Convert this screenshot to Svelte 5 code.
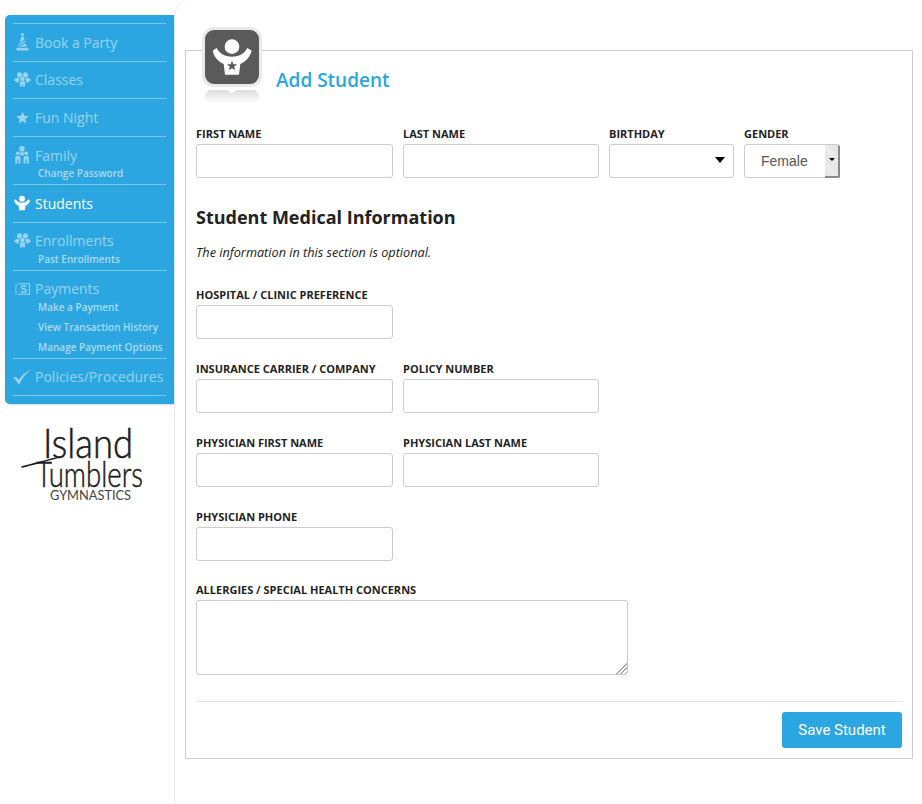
<script>
   // left menu, sub links are plain text rows under the main entry
   const menu = [
      { label: 'Book a Party', icon: 'hat' },
      { label: 'Classes', icon: 'group' },
      { label: 'Fun Night', icon: 'star' },
      { label: 'Family', icon: 'family', subs: ['Change Password'] },
      { label: 'Students', icon: 'kid', active: true },
      { label: 'Enrollments', icon: 'group', subs: ['Past Enrollments'] },
      { label: 'Payments', icon: 'bill', subs: ['Make a Payment', 'View Transaction History', 'Manage Payment Options'] },
      { label: 'Policies/Procedures', icon: 'check' }
   ];
</script>

{#snippet kid()}
   <circle cx="126" cy="78" r="22" />
   <path d="M68 90 L80 82 C88 98 102 108 126 108 C150 108 164 98 172 82 L185 90 C180 108 168 122 151 130 L147 162 L105 162 L101 130 C84 122 72 108 68 90 Z" />
{/snippet}

{#snippet icon(name)}
   {#if name === 'hat'}
      <svg class="ico hat" viewBox="0 0 13 18">
         <circle cx="6.500" cy="1.500" r="1.400" />
         <path d="M5.600 3.500 L7.400 3.500 L10.800 13.500 L2.200 13.500 Z" />
         <path d="M4 9 L9 6.500 L9.300 7.600 L3.500 10.500 Z M3 12 L10 8.800 L10.300 9.900 L2.800 13.300 Z" class="cut" />
         <path d="M0.500 14.800 H12.500 V17.500 H0.500 Z" />
      </svg>
   {:else if name === 'group'}
      <svg class="ico" viewBox="0 0 20 20">
         <circle cx="6.500" cy="4.500" r="3" />
         <circle cx="13.500" cy="4.500" r="3" />
         <circle cx="10" cy="9.500" r="2.600" />
         <path d="M0 11 C1 8 4 7.500 6 8.200 L6.500 10.500 L4.500 14 Z" />
         <path d="M20 11 C19 8 16 7.500 14 8.200 L13.500 10.500 L15.500 14 Z" />
         <path d="M6.500 12.800 C8 12 12 12 13.500 12.800 L12.500 18.500 H11 L10 15.800 L9 18.500 H7.500 Z" />
      </svg>
   {:else if name === 'star'}
      <svg class="ico star" viewBox="1 1.500 18 17">
         <path d="M10 2 L12.500 7.600 L18.600 8.200 L14 12.200 L15.400 18.200 L10 15 L4.600 18.200 L6 12.200 L1.400 8.200 L7.500 7.600 Z" />
      </svg>
   {:else if name === 'family'}
      <svg class="ico family" viewBox="0 0 14 18">
         <circle cx="7" cy="2.800" r="2.800" />
         <circle cx="2.800" cy="7.300" r="1.900" />
         <circle cx="11.200" cy="7.300" r="1.900" />
         <path d="M0.200 11 C0.500 9.500 5 9.500 5.400 11 L5.400 17.500 H3.500 V13.500 H2.200 V17.500 H0.200 Z" />
         <path d="M8.600 11 C9 9.500 13.500 9.500 13.800 11 L13.800 17.500 H11.800 V13.500 H10.500 V17.500 H8.600 Z" />
         <path d="M5.200 6.200 H8.800 V9.500 H5.200 Z" />
      </svg>
   {:else if name === 'kid'}
      <svg class="ico kid" viewBox="60 50 132 118">{@render kid()}</svg>
   {:else if name === 'bill'}
      <svg class="ico bill" viewBox="0 0 15 12">
         <path class="line" d="M3 0.700 H14.500 V11.300 H3 M1 0.700 V4.500 M0 6 H1.500 M1 7.500 V11.300" />
         <text x="8.700" y="10" text-anchor="middle">S</text>
      </svg>
   {:else if name === 'check'}
      <svg class="ico big" viewBox="0 0 20 17">
         <path d="M0 9 L3.500 8.500 L6.500 11.500 C9.500 7 14 3 20 0 C15 4 10 10 7 16.500 L6 16.500 C4.500 13.500 2.500 11 0 9 Z" />
      </svg>
   {/if}
{/snippet}

<div class="page">
   <aside class="side">
      <nav class="menu">
         {#each menu as item}
            <div class="item" class:active={item.active} class:has-subs={item.subs}>
               <div class="main">
                  <span class="ico-slot">{@render icon(item.icon)}</span>
                  {item.label}
               </div>
               {#each item.subs ?? [] as sub}
                  <div class="sub">{sub}</div>
               {/each}
            </div>
         {/each}
      </nav>

      <div class="logo">
         <svg viewBox="0 0 145 90" width="145" height="90">
            <g class="hand">
               <text transform="translate(33,45) scale(1,1.9)" font-size="22" textLength="90" lengthAdjust="spacingAndGlyphs">Island</text>
               <text transform="translate(26,74) scale(1,1.7)" font-size="21" textLength="107" lengthAdjust="spacingAndGlyphs">Tumblers</text>
            </g>
            <path class="pen" d="M12 54 C24 51 38 47 50 44" />
         </svg>
         <div class="logo-sub">GYMNASTICS</div>
      </div>
   </aside>

   <main class="panel">
      <section class="box">
         <header class="head">
            <div class="badge">
               <div class="badge-tile">
                  <svg viewBox="45 28 162 162">
                     {@render kid()}
                     <path class="badge-star" d="M126 120 L130 131 L141 131 L132.500 138 L136 149 L126 142.500 L116 149 L119.500 138 L111 131 L122 131 Z" />
                  </svg>
               </div>
               <div class="badge-shine"></div>
            </div>
            <h1>Add Student</h1>
         </header>

         <form class="form">
            <div class="row">
               <label class="field"><span>First Name</span><input type="text" /></label>
               <label class="field"><span>Last Name</span><input type="text" /></label>
               <label class="field birthday">
                  <span>Birthday</span>
                  <div class="select-wrap">
                     <select></select>
                     <i class="caret"></i>
                  </div>
               </label>
               <label class="field gender">
                  <span>Gender</span>
                  <div class="select-wrap">
                     <select><option>Female</option><option>Male</option></select>
                     <b class="handle"><i class="caret small"></i></b>
                  </div>
               </label>
            </div>

            <h2>Student Medical Information</h2>
            <p class="note">The information in this section is optional.</p>

            <div class="row first-med">
               <label class="field"><span>Hospital / Clinic Preference</span><input type="text" /></label>
            </div>
            <div class="row">
               <label class="field"><span>Insurance Carrier / Company</span><input type="text" /></label>
               <label class="field"><span>Policy Number</span><input type="text" /></label>
            </div>
            <div class="row">
               <label class="field"><span>Physician First Name</span><input type="text" /></label>
               <label class="field"><span>Physician Last Name</span><input type="text" /></label>
            </div>
            <div class="row last-short">
               <label class="field"><span>Physician Phone</span><input type="text" /></label>
            </div>
            <div class="row">
               <label class="field wide">
                  <span>Allergies / Special Health Concerns</span>
                  <div class="area-wrap">
                     <textarea></textarea>
                     <i class="grip"></i>
                  </div>
               </label>
            </div>

            <div class="actions">
               <button type="button">Save Student</button>
            </div>
         </form>
      </section>
   </main>
</div>

<style>
   :global(body) {
      margin: 0;
      background: #fff;
      font-family: "Open Sans", "Liberation Sans", sans-serif;
   }

   .page {
      display: flex;
      align-items: stretch;
      width: 922px;
      height: 804px;
      overflow: hidden;
   }

   .side {
      flex: 0 0 174px;
      min-width: 0;
      box-sizing: border-box;
      padding: 15px 0 0 5px;
   }

   .menu {
      background: #2ba6e1;
      border-radius: 5px 0 0 5px;
      padding: 8px;
      height: 389px;
      box-sizing: border-box;
      box-shadow: 0 1px 2px rgba(0, 0, 0, 0.15);
   }

   .item {
      border-top: 1px solid rgba(255, 255, 255, 0.38);
      padding: 8px 0 8.700px;
      color: rgba(255, 255, 255, 0.52);
   }

   .item.has-subs {
      padding-bottom: 1px;
   }

   .item:last-child {
      border-bottom: 1px solid rgba(255, 255, 255, 0.38);
   }

   .item.active {
      color: #fff;
   }

   .main {
      display: flex;
      align-items: center;
      height: 20px;
      font-size: 14px;
      white-space: nowrap;
   }

   .ico-slot {
      flex: 0 0 22px;
      display: flex;
      justify-content: center;
      margin: 0 0 0 -2px;
      padding-right: 2px;
   }

   .ico {
      width: 17px;
      height: 17px;
      fill: currentColor;
   }

   .ico.hat {
      width: 13px;
      height: 18px;
   }

   .ico.hat .cut {
      fill: #2ba6e1;
   }

   .ico.star {
      width: 13px;
      height: 13px;
   }

   .ico.family {
      width: 14px;
      height: 18px;
   }

   .ico.kid {
      width: 18px;
      height: 16px;
   }

   .ico.big {
      width: 18px;
      height: 16px;
   }

   .ico.bill {
      width: 15px;
      height: 12px;
   }

   .ico .line {
      fill: none;
      stroke: currentColor;
      stroke-width: 1.1;
   }

   .ico text {
      font: 700 10px "Liberation Sans", sans-serif;
   }

   .sub {
      height: 20px;
      line-height: 20px;
      margin-left: 25px;
      font-size: 10px;
      font-weight: 600;
      white-space: nowrap;
      color: rgba(255, 255, 255, 0.6);
   }

   .main + .sub {
      margin-top: -2px;
   }

   .logo {
      margin: 9px 0 0 5px;
      height: 100px;
   }

   .logo svg {
      display: block;
   }

   .pen {
      fill: none;
      stroke: #1c1c1c;
      stroke-width: 1.5;
      stroke-linecap: round;
   }

   .hand text {
      font-family: Lato, sans-serif;
      font-weight: 300;
      fill: #1c1c1c;
      stroke: #1c1c1c;
      stroke-width: 0.3;
   }

   .logo-sub {
      margin: -15px 0 0 40px;
      font-family: Lato, sans-serif;
      font-size: 12.8px;
      color: #444;
      line-height: 14px;
   }

   .panel {
      flex: 1;
      min-width: 0;
      box-sizing: border-box;
      padding: 50px 9px 0 10px;
      border-left: 1px solid #e6e6e6;
      border-top-left-radius: 16px;
   }

   .box {
      border: 1px solid #ccc;
      height: 709px;
      box-sizing: border-box;
      padding: 0 10px;
   }

   .head {
      display: flex;
      align-items: flex-start;
      height: 60px;
      padding-left: 6px;
   }

   .badge {
      flex: 0 0 60px;
      margin-top: -24px;
   }

   .badge-tile {
      box-sizing: border-box;
      width: 60px;
      height: 60px;
      background: #5a5a5a;
      border: 3px solid #e9e9e9;
      border-radius: 12px;
   }

   .badge-tile svg {
      display: block;
      width: 100%;
      height: 100%;
      fill: #fff;
   }

   .badge-tile svg .badge-star {
      fill: #5a5a5a;
   }

   .badge-shine {
      width: 54px;
      height: 13px;
      margin: 3px 0 0 3px;
      background: linear-gradient(#dcdcdc, #fff);
      clip-path: polygon(0 100%, 0 30%, 8% 0, 40% 0, 50% 25%, 60% 0, 92% 0, 100% 30%, 100% 100%);
   }

   h1 {
      margin: 16px 0 0 14px;
      font-size: 19px;
      line-height: 26px;
      font-weight: 600;
      color: #2ba6e1;
   }

   .form {
      padding-top: 15px;
   }

   .row {
      display: flex;
      gap: 10px;
      margin-bottom: 22px;
   }

   .row.last-short {
      margin-bottom: 21px;
   }

   .field {
      display: block;
      width: 197px;
   }

   .field:nth-child(2) {
      width: 196px;
   }

   .field span {
      display: block;
      height: 16px;
      margin-bottom: 2px;
      line-height: 16px;
      font-size: 11px;
      font-weight: 700;
      text-transform: uppercase;
      color: #1f1f1f;
      white-space: nowrap;
   }

   .field.birthday {
      width: 125px;
   }

   .field.gender {
      width: 96px;
   }

   .field.wide {
      width: 432px;
   }

   input,
   select,
   textarea {
      display: block;
      box-sizing: border-box;
      width: 100%;
      height: 34px;
      margin: 0;
      padding: 0 12px;
      background: #fff;
      border: 1px solid #ccc;
      border-radius: 3px;
      font: 14px "Liberation Sans", sans-serif;
      color: #555;
      outline: none;
      appearance: none;
   }

   textarea {
      height: 75px;
      resize: none;
   }

   .select-wrap,
   .area-wrap {
      position: relative;
   }

   .gender select {
      padding-left: 16px;
   }

   .caret {
      position: absolute;
      right: 9px;
      top: 13px;
      width: 0;
      height: 0;
      border: 5px solid transparent;
      border-top: 6px solid #000;
      border-bottom: 0;
   }

   .handle {
      position: absolute;
      top: 1px;
      right: 0;
      bottom: 0;
      width: 15px;
      background: repeating-linear-gradient(45deg, #e2e2e2 0 1px, #efefef 1px 2px);
      border-right: 2px solid #8a8a8a;
      border-bottom: 2px solid #8a8a8a;
      border-radius: 0 2px 2px 0;
      box-sizing: border-box;
   }

   .caret.small {
      right: 3px;
      top: 13px;
      border-width: 3px;
      border-top-width: 3px;
      border-bottom: 0;
   }

   .grip {
      position: absolute;
      right: 1px;
      bottom: 1px;
      width: 12px;
      height: 12px;
      clip-path: polygon(100% 0, 100% 100%, 0 100%);
      background: repeating-linear-gradient(135deg, #aaa 0 1px, #fff 1px 3px);
   }

   h2 {
      margin: 27px 0 0;
      font-size: 18px;
      line-height: 24px;
      font-weight: 700;
      color: #222;
   }

   .note {
      margin: 14px 0 0;
      font-size: 12.7px;
      line-height: 18px;
      font-style: italic;
      color: #222;
   }

   .first-med {
      margin-top: 26px;
   }

   .actions {
      display: flex;
      justify-content: flex-end;
      border-top: 1px solid #e5e5e5;
      margin-top: 26px;
      padding-top: 10px;
   }

   button {
      width: 120px;
      height: 36px;
      border: 0;
      border-radius: 3px;
      background: #2ba6e1;
      color: #fff;
      font: 15px Roboto, "Liberation Sans", sans-serif;
   }
</style>
